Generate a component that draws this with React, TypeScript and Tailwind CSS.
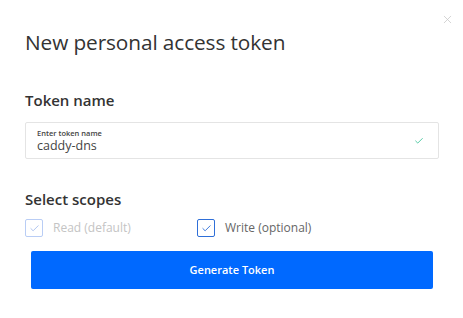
import { Check, X } from 'lucide-react'

export default function App() {
  return (
    <div
      className="relative w-[463px] h-[318px] bg-white text-[#333]"
      style={{ fontFamily: '"Open Sans", "Liberation Sans", sans-serif' }}
    >
      {/* Close */}
      <button className="absolute right-[9px] top-[13px] text-[#c8c8c8]">
        <X className="w-[13px] h-[13px]" strokeWidth={1.4} />
      </button>

      <div className="pl-[25px] pr-[24px] pt-[28px]">
        <h1 className="text-[20.8px] leading-[28px] text-[#333] tracking-[-0.1px]">
          New personal access token
        </h1>

        {/* Token name */}
        <h2 className="mt-[34px] text-[15px] leading-[20px] font-semibold text-[#333]">
          Token name
        </h2>
        <div className="mt-[12px] h-[37px] border border-[#e4e4e4] rounded-[2px] flex items-center pl-[11px] pr-[14px]">
          <div className="flex-1 flex flex-col">
            <span className="text-[7.5px] leading-[10px] text-[#444] font-semibold">Enter token name</span>
            <span className="text-[12.5px] leading-[16px] text-[#444]">caddy-dns</span>
          </div>
          <Check className="w-[10px] h-[10px] text-[#35c295]" strokeWidth={2} />
        </div>

        {/* Scopes */}
        <h2 className="mt-[30px] text-[15px] leading-[20px] font-semibold text-[#333]">
          Select scopes
        </h2>
        <div className="mt-[10px] flex items-center">
          <label className="flex items-center gap-[10px] w-[172px]">
            <span className="w-[18px] h-[18px] border border-[#b9cdf5] rounded-[2px] flex items-center justify-center">
              <Check className="w-[11px] h-[11px] text-[#aac0ee]" strokeWidth={2} />
            </span>
            <span className="text-[12px] text-[#c4c4c4]">Read (default)</span>
          </label>
          <label className="flex items-center gap-[10px]">
            <span className="w-[18px] h-[18px] border-[1.5px] border-[#2f6fd8] rounded-[2px] flex items-center justify-center">
              <Check className="w-[11px] h-[11px] text-[#2f6fd8]" strokeWidth={2} />
            </span>
            <span className="text-[12px] text-[#666]">Write (optional)</span>
          </label>
        </div>

        <div className="mt-[14px] px-[6px]">
          <button className="w-full h-[38px] bg-[#0069ff] rounded-[2px] text-white text-[11px] font-semibold">
            Generate Token
          </button>
        </div>
      </div>
    </div>
  )
}
